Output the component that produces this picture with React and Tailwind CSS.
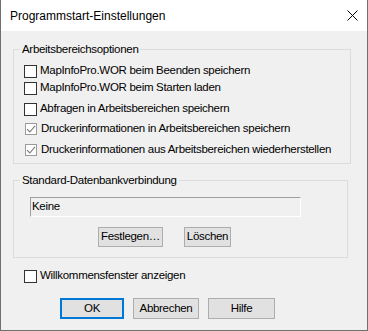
import React from "react";

const font = { fontFamily: '"Liberation Sans", Arial, sans-serif' };

function Box({ checked }) {
  if (checked) {
    return (
      <span className="w-[12px] h-[12px] border border-[#9a9a9a] bg-white flex items-center justify-center shrink-0">
        <svg width="10" height="10" viewBox="0 0 10 10">
          <path d="M1 5.2 L3.8 8 L9 1.8" fill="none" stroke="#7a7a7a" strokeWidth="1.1" />
        </svg>
      </span>
    );
  }
  return <span className="w-[13px] h-[13px] border border-[#333333] bg-white shrink-0" />;
}

function Row({ checked, label, className }) {
  return (
    <div className={"flex items-center h-[16px] " + (checked ? "pl-[11px] gap-[4px] " : "pl-[10px] gap-[3px] ") + className}>
      <Box checked={checked} />
      <span className="whitespace-nowrap">{label}</span>
    </div>
  );
}

function Btn({ children, className }) {
  return (
    <button className={"h-[20px] bg-[#e1e1e1] border border-[#adadad] flex items-center justify-center leading-none " + className}>
      {children}
    </button>
  );
}

export default function App() {
  return (
    <div
      className="w-[368px] h-[331px] bg-[#f0f0f0] border border-t-0 border-[#707070] flex flex-col text-[11.5px] tracking-[-0.3px] text-black"
      style={font}
    >
      <div className="h-[31px] bg-white flex items-center justify-between pl-[9px] pr-[9px] shrink-0">
        <span className="text-[12px] tracking-normal">Programmstart-Einstellungen</span>
        <svg width="11" height="11" viewBox="0 0 11 11">
          <path d="M0.5 0.5 L10.5 10.5 M10.5 0.5 L0.5 10.5" stroke="#000" strokeWidth="1" />
        </svg>
      </div>

      <fieldset className="mt-[10px] ml-[12px] mr-[16px] border border-[#dcdcdc] pb-[5px]">
        <legend className="ml-[6px] px-[2px] leading-[16px]">Arbeitsbereichsoptionen</legend>
        <Row className="mt-[6px]" label="MapInfoPro.WOR beim Beenden speichern" />
        <Row className="mt-[1px]" label="MapInfoPro.WOR beim Starten laden" />
        <Row className="mt-[5px]" label="Abfragen in Arbeitsbereichen speichern" />
        <Row className="mt-[4px]" checked label="Druckerinformationen in Arbeitsbereichen speichern" />
        <Row className="mt-[5px]" checked label="Druckerinformationen aus Arbeitsbereichen wiederherstellen" />
      </fieldset>

      <fieldset className="mt-[8px] ml-[12px] mr-[19px] border border-[#dcdcdc] pb-[10px]">
        <legend className="ml-[6px] px-[2px] leading-[16px]">Standard-Datenbankverbindung</legend>
        <div className="mt-[9px] ml-[16px] w-[271px] h-[20px] border-t border-l border-[#a0a0a0] border-b border-b-white border-r border-r-white flex items-center pl-[1px]">
          Keine
        </div>
        <div className="mt-[10px] ml-[84px] flex gap-[21px]">
          <Btn className="w-[65px]">Festlegen…</Btn>
          <Btn className="w-[47px]">Löschen</Btn>
        </div>
      </fieldset>

      <div className="mt-[10px] ml-[23px] flex items-center h-[16px] gap-[3px]">
        <Box />
        <span>Willkommensfenster anzeigen</span>
      </div>

      <div className="mt-[14px] ml-[59px] flex gap-[9px]">
        <button className="w-[64px] h-[21px] bg-[#e1e1e1] border-2 border-[#0078d7] flex items-center justify-center leading-none">
          OK
        </button>
        <button className="w-[66px] h-[21px] bg-[#e1e1e1] border border-[#adadad] flex items-center justify-center leading-none">
          Abbrechen
        </button>
        <button className="w-[67px] h-[21px] bg-[#e1e1e1] border border-[#adadad] flex items-center justify-center leading-none">
          Hilfe
        </button>
      </div>
    </div>
  );
}
